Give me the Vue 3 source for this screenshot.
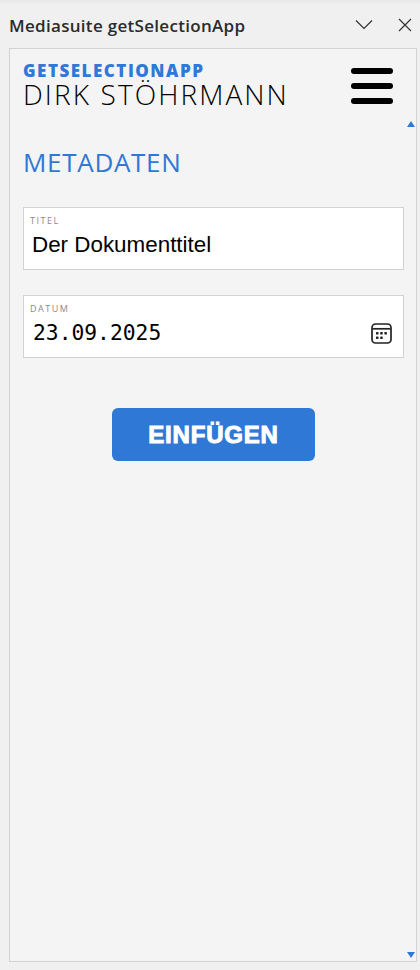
<script setup>
import { ref } from 'vue';

const title = ref('Der Dokumenttitel');
const date = ref('23.09.2025');
</script>

<template>
  <div class="pane">
    <div class="pane-bar">
      <span class="pane-title">Mediasuite getSelectionApp</span>
      <div class="pane-actions">
        <svg width="18" height="12" viewBox="0 0 18 12"><path d="M1 1.5 9 9.5 17 1.5" fill="none" stroke="#333" stroke-width="1.2" /></svg>
        <svg width="14" height="14" viewBox="0 0 14 14"><path d="M1 1 13 13M13 1 1 13" fill="none" stroke="#333" stroke-width="1.2" /></svg>
      </div>
    </div>

    <div class="panel">
      <header class="head">
        <div>
          <div class="app-name">GETSELECTIONAPP</div>
          <div class="user-name">DIRK STÖHRMANN</div>
        </div>
        <div class="burger"><i></i><i></i><i></i></div>
      </header>

      <h1 class="section">METADATEN</h1>

      <label class="field">
        <span class="field-label">TITEL</span>
        <input v-model="title" class="field-input" type="text" />
      </label>

      <label class="field field-date">
        <span class="field-label">DATUM</span>
        <div class="date-row">
          <input v-model="date" class="field-input mono" type="text" />
          <svg class="cal" width="21" height="21" viewBox="0 0 21 21">
            <rect x="1" y="1" width="19" height="19" rx="3.5" fill="none" stroke="#222" stroke-width="1.7" />
            <path d="M1.5 5.8H19.5" stroke="#222" stroke-width="1.7" />
            <g fill="#222">
              <rect x="5" y="9" width="2.5" height="2.5" rx=".6" />
              <rect x="9.2" y="9" width="2.5" height="2.5" rx=".6" />
              <rect x="13.4" y="9" width="2.5" height="2.5" rx=".6" />
              <rect x="5" y="13.5" width="2.5" height="2.5" rx=".6" />
              <rect x="9.2" y="13.5" width="2.5" height="2.5" rx=".6" />
            </g>
          </svg>
        </div>
      </label>

      <button class="insert" type="button">EINFÜGEN</button>

      <span class="scroll scroll-up"></span>
      <span class="scroll scroll-down"></span>
    </div>
  </div>
</template>

<style>
html,
body {
  margin: 0;
  background: #f0f0f0;
}
</style>

<style scoped>
.pane {
  width: 420px;
  height: 970px;
  box-sizing: border-box;
  display: flex;
  flex-direction: column;
  padding: 0 3px 8px 9px;
  background: linear-gradient(#e8e8e8, #f0f0f0 5px);
  font-family: "Open Sans", sans-serif;
}

.pane-bar {
  height: 48px;
  flex: none;
  display: flex;
  align-items: center;
  justify-content: space-between;
  padding-right: 5px;
}

.pane-title {
  font-size: 17px;
  font-weight: 600;
  letter-spacing: .3px;
  color: #2b2b2b;
  margin-top: 2px;
}

.pane-actions {
  display: flex;
  align-items: center;
  gap: 25px;
  margin-top: 1px;
}

.panel {
  position: relative;
  flex: 1;
  box-sizing: border-box;
  border: 1px solid #d2d2d2;
  background: #f4f4f4;
  padding: 13px 12px 0 13px;
}

.head {
  display: flex;
  justify-content: space-between;
  align-items: flex-start;
}

.app-name {
  font-size: 17px;
  line-height: 18px;
  font-weight: 800;
  letter-spacing: 1.5px;
  color: #3078d6;
}

.user-name {
  font-size: 28px;
  line-height: 29px;
  font-weight: 300;
  letter-spacing: 2.1px;
  color: #000;
}

.burger {
  display: flex;
  flex-direction: column;
  gap: 9px;
  margin: 6px 11px 0 0;
}

.burger i {
  display: block;
  width: 42px;
  height: 6px;
  border-radius: 3px;
  background: #000;
}

.section {
  margin: 36px 0 28px;
  font-size: 26px;
  line-height: 34px;
  font-weight: 400;
  letter-spacing: .7px;
  color: #3078d6;
}

.field {
  display: block;
  box-sizing: border-box;
  height: 63px;
  padding: 6px 8px 0 6px;
  border: 1px solid #d2d2d2;
  background: #fff;
}

.field-date {
  margin-top: 25px;
}

.field-label {
  display: block;
  font-size: 9px;
  line-height: 13px;
  letter-spacing: 1.5px;
  color: #8a8a8a;
}

.field-input {
  display: block;
  width: 100%;
  margin-top: 3px;
  padding: 0 0 0 2px;
  border: 0;
  outline: 0;
  background: none;
  font-family: "Liberation Sans", sans-serif;
  font-size: 22.4px;
  line-height: 30px;
  color: #000;
}

.date-row {
  display: flex;
  align-items: center;
  gap: 8px;
}

.mono {
  flex: 1;
  min-width: 0;
  font-family: "DejaVu Sans Mono", monospace;
  font-size: 21.3px;
  padding-left: 3px;
}

.cal {
  flex: none;
  margin: 3px 3px 0 0;
}

.insert {
  display: block;
  width: 203px;
  height: 53px;
  margin: 50px auto 0;
  border: 0;
  border-radius: 6px;
  background: #3078d6;
  color: #fff;
  font-family: "Liberation Sans", sans-serif;
  font-size: 24px;
  font-weight: 700;
  -webkit-text-stroke: 1px #fff;
  letter-spacing: .8px;
}

.scroll {
  position: absolute;
  right: 1px;
  width: 0;
  height: 0;
  border-left: 4px solid transparent;
  border-right: 4px solid transparent;
}

.scroll-up {
  top: 72px;
  border-bottom: 6px solid #3078d6;
}

.scroll-down {
  bottom: 3px;
  border-top: 6px solid #3078d6;
}
</style>
